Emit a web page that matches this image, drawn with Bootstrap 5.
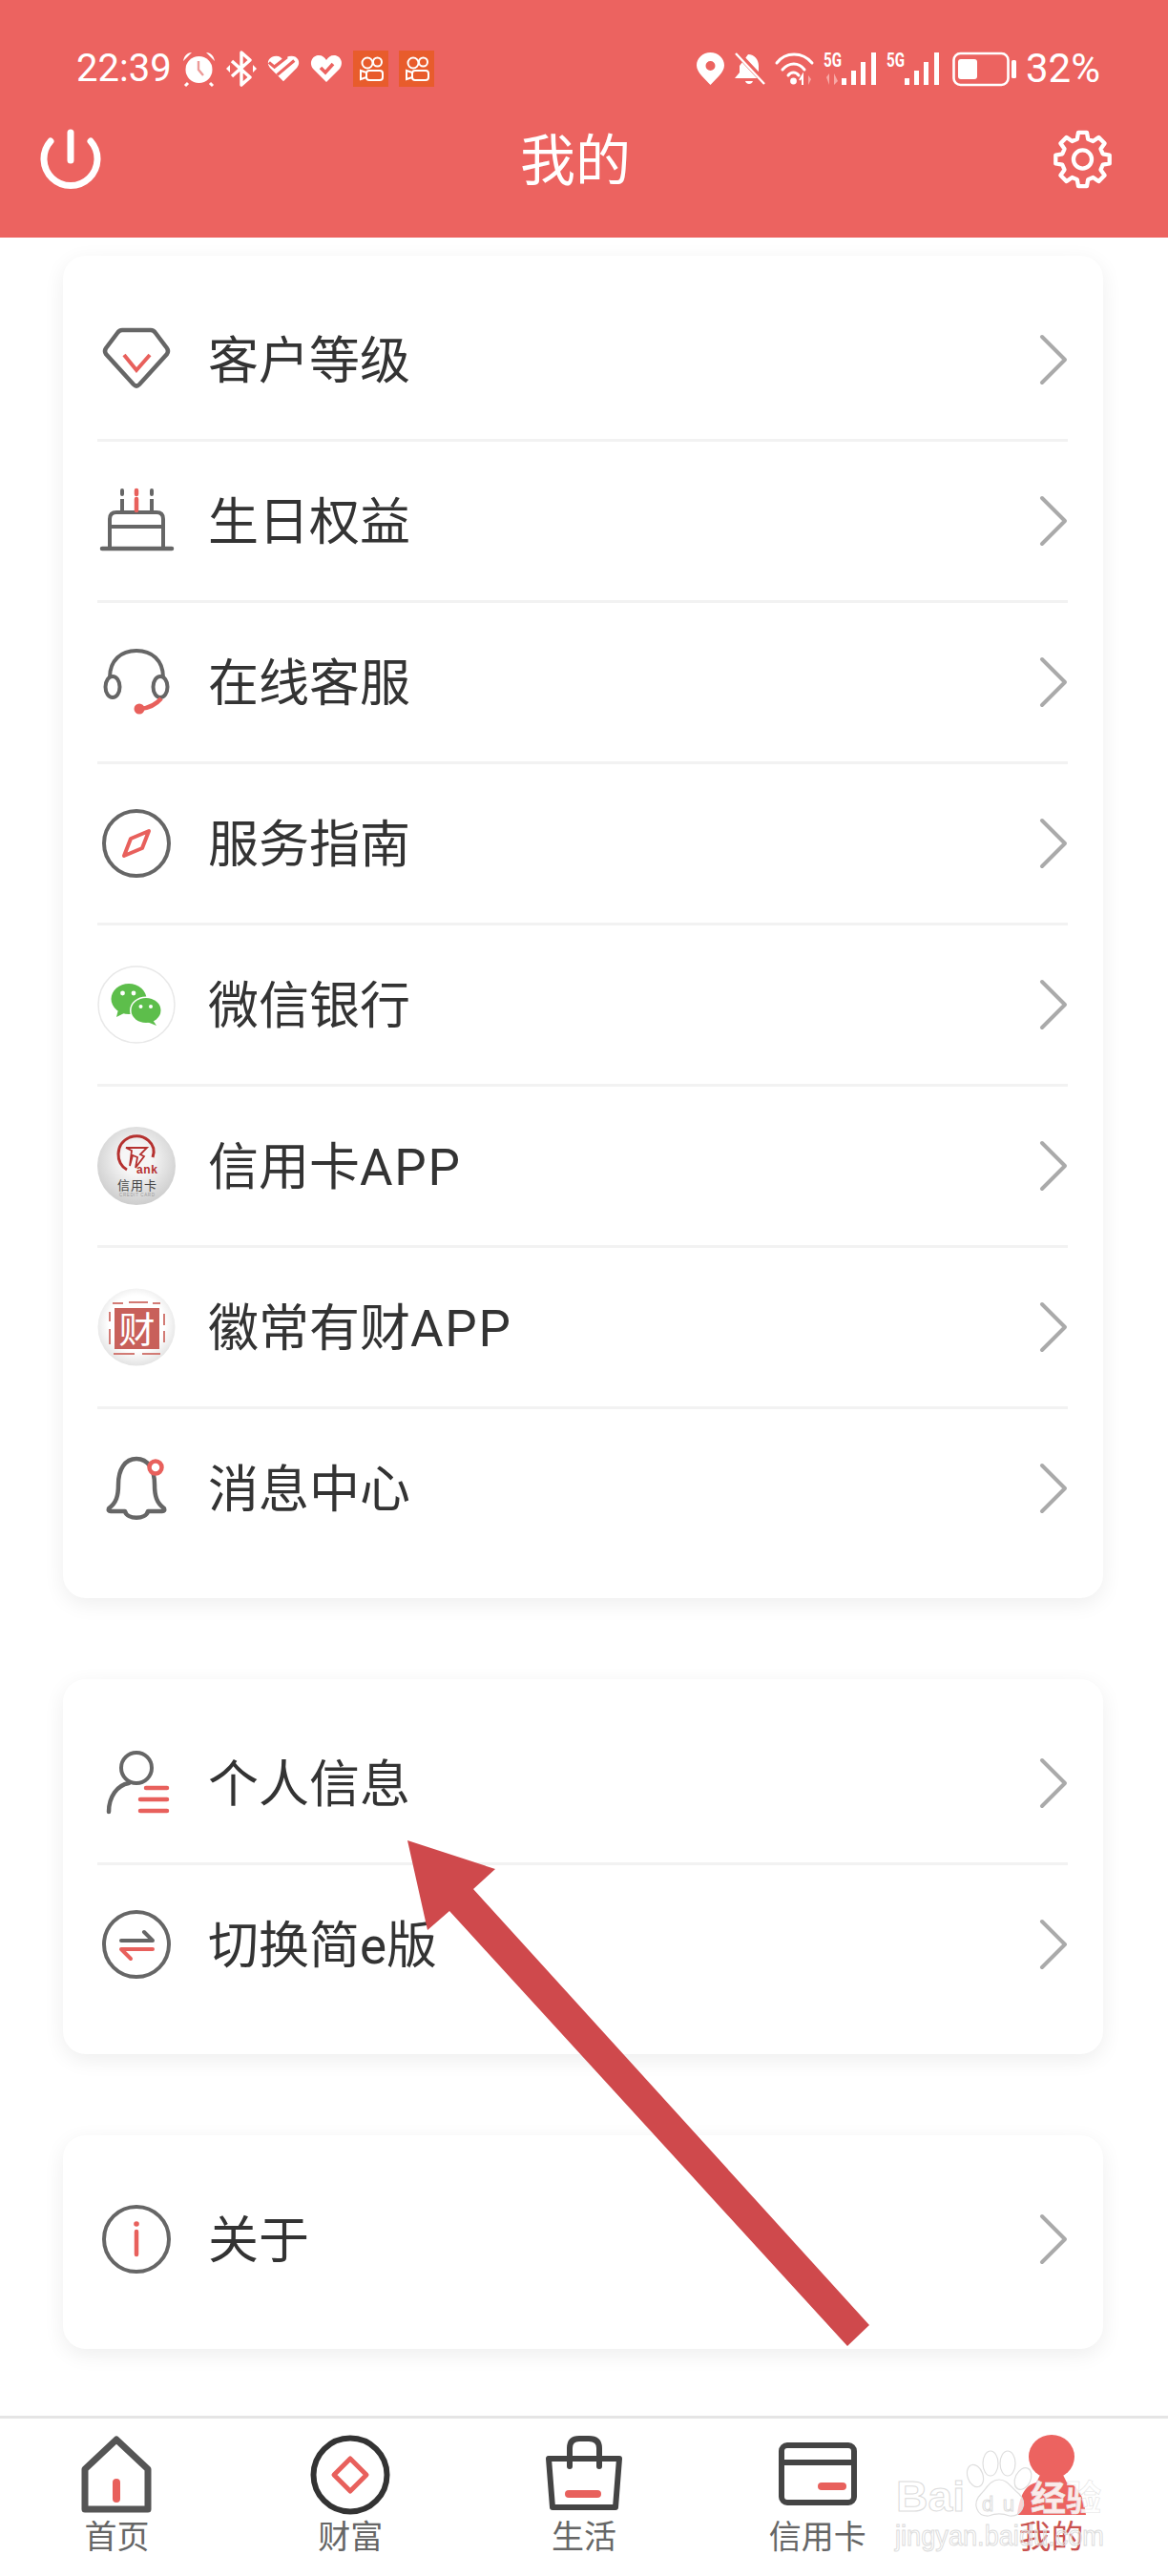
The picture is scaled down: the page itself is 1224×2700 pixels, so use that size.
<!DOCTYPE html>
<html lang="zh-CN">
<head>
<meta charset="utf-8">
<title>我的</title>
<link href="https://cdn.jsdelivr.net/npm/bootstrap@5.3.0/dist/css/bootstrap.min.css" rel="stylesheet">
<style>
body{font-family:Roboto,"Noto Sans CJK SC",sans-serif;background:#fff;color:#333}
.page-shell{width:1224px;height:2700px}
.top-head{background:#ec6360;height:249px;padding-top:53px;color:#fff}
.stat-row{height:38px;padding:0 71px 0 80px}
.stat-row svg{overflow:visible}
.stat-time{width:100px;font-size:40px;line-height:38px;white-space:nowrap}
.stat-pct{font-size:42px;line-height:38px;white-space:nowrap}
.stat-gap-l{gap:11px}
.stat-gap-r{gap:10px}
.title-row{margin-top:44px;height:64px;padding:0 59px 0 42px}
.title-text{font-size:58px;line-height:64px;margin:4px 4px 0 0}
.sheet-wrap{padding:19px 68px 0 66px}
.sheet{border:0;border-radius:24px;background:#fff;box-shadow:0 6px 22px rgba(0,0,0,.07);padding:26px 37px 32px 36px;margin-bottom:85px}
.sheet:last-child{margin-bottom:0}
.sheet .list-group-item{height:169px;padding:0;border:0;border-bottom:3px solid #f2f2f2;background:transparent;gap:34px;font-size:53px;color:#333}
.sheet .list-group-item:last-child{height:166px;border-bottom:0}
.row-label{flex:1;line-height:64px;padding-top:4px}
.latin-run{letter-spacing:1.700px}
.chev{margin-right:-1px}
.tab-bar{margin-top:auto;border-top:3px solid #e5e5e5;padding-top:17px;height:168px;background:#fff}
.tab-name{font-size:34px;line-height:40px;margin-top:3px;color:#666;white-space:nowrap}
.tab-name-on{color:#c9524f}
.over-arrow{left:420px;top:1920px}
.over-mark{left:930px;top:2550px}
</style>
</head>
<body>
<div class="page-shell position-relative d-flex flex-column">

<header class="top-head">
  <div class="stat-row d-flex justify-content-between align-items-center">
    <div class="d-flex align-items-center stat-gap-l">
      <span class="stat-time">22:39</span>
      <svg width="35" height="36" viewBox="0 0 35 36"><circle cx="17.500" cy="19" r="14" fill="#fff"/><path d="M1 10C2 4 6 1 10 1ZM34 10C33 4 29 1 25 1Z" fill="#fff"/><path d="M6 33 3 36M29 33 32 36" stroke="#fff" stroke-width="3"/><path d="M17 10V19L22 25" fill="none" stroke="#ec9a98" stroke-width="2.400"/></svg>
      <svg width="32" height="38" viewBox="0 0 32 38"><path d="M6 11 25 28 16 36V2L25 10 6 27" fill="none" stroke="#fff" stroke-width="3.400" stroke-linejoin="round"/><path d="M0 19 4 15V23ZM32 19 28 15V23Z" fill="#fff"/></svg>
      <svg width="34" height="30" viewBox="0 0 36 30"><path d="M18 29 3 14C-2 7 3 1 10 1 14 1 16 3 18 6 20 3 23 1 27 1 34 1 38 8 33 14Z" fill="#fff"/><path d="M2 8 8 13 22 2M11 22 30 6" fill="none" stroke="#ec6360" stroke-width="3.400"/></svg>
      <svg width="34" height="30" viewBox="0 0 34 30"><path d="M17 29 3 15C-2 8 3 1 9 1 13 1 15 3 17 6 19 3 21 1 25 1 31 1 36 8 31 15Z" fill="#fff"/><path d="M11 14 16 19 24 10" fill="none" stroke="#ec6360" stroke-width="3.600"/></svg>
      <svg width="37" height="38" viewBox="0 0 37 38"><rect width="37" height="38" fill="#e85c2c"/><g fill="none" stroke="#fff" stroke-width="2"><circle cx="15" cy="13" r="5.500"/><circle cx="25.500" cy="12" r="4.500"/><rect x="14" y="21" width="17" height="10" rx="3"/><path d="M14 23 8 21V30L14 28"/></g></svg>
      <svg width="37" height="38" viewBox="0 0 37 38"><rect width="37" height="38" fill="#e85c2c"/><g fill="none" stroke="#fff" stroke-width="2"><circle cx="15" cy="13" r="5.500"/><circle cx="25.500" cy="12" r="4.500"/><rect x="14" y="21" width="17" height="10" rx="3"/><path d="M14 23 8 21V30L14 28"/></g></svg>
    </div>
    <div class="d-flex align-items-center stat-gap-r">
      <svg width="29" height="34" viewBox="0 0 29 34"><path fill-rule="evenodd" d="M14.500 34C9 28 0 21 0 13.500 0 6 6.500 0 14.500 0S29 6 29 13.500C29 21 20 28 14.500 34ZM14.500 9A5 5 0 1 0 14.500 19 5 5 0 0 0 14.500 9Z" fill="#fff"/></svg>
      <svg width="33" height="36" viewBox="0 0 33 36"><path d="M15 3C22 3 26 9 26 15V23L30 28H1L6 22V15Z" fill="#fff"/><path d="M12 31H20C19 35 13 35 12 31Z" fill="#fff"/><path d="M3 1 33 33" stroke="#ec6360" stroke-width="6"/><path d="M2 2 32 34" stroke="#fff" stroke-width="2.400"/></svg>
      <svg width="41" height="34" viewBox="0 0 41 34"><g fill="none" stroke="#fff" stroke-width="3" stroke-linecap="round"><path d="M2 11C11 -1 29 -1 39 11"/><path d="M8 18C15 10 25 10 31 18"/><path d="M14 24C17 20 22 20 25 24"/></g><circle cx="19.500" cy="30" r="3.400" fill="#fff"/><path d="M29 34V24L26 29" fill="none" stroke="#fff" stroke-width="2"/><path d="M35 34V24L38 28Z" fill="#f7a9a6"/></svg>
      <svg width="56" height="34" viewBox="0 0 56 34"><text x="0" y="15" font-family="Roboto" font-weight="700" font-size="20" fill="#fff" textLength="19" lengthAdjust="spacingAndGlyphs">5G</text><path d="M6 34V22L3 26ZM11 22V34L15 30Z" fill="#f7a9a6"/><g fill="#fff"><rect x="19" y="27" width="5" height="7"/><rect x="29" y="19" width="5" height="15"/><rect x="39" y="10" width="5" height="24"/><rect x="50" y="0" width="5" height="34"/></g></svg>
      <svg width="55" height="34" viewBox="0 0 55 34"><text x="0" y="15" font-family="Roboto" font-weight="700" font-size="20" fill="#fff" textLength="19" lengthAdjust="spacingAndGlyphs">5G</text><g fill="#fff"><rect x="19" y="27" width="5" height="7"/><rect x="29" y="19" width="5" height="15"/><rect x="39" y="10" width="5" height="24"/><rect x="50" y="0" width="5" height="34"/></g></svg>
      <svg width="71" height="36" viewBox="0 0 71 36"><rect x="5.500" y="2" width="57" height="33" rx="7" fill="none" stroke="#fff" stroke-width="2.600"/><rect x="10" y="8" width="20" height="21" rx="3" fill="#fff"/><rect x="66" y="9" width="5" height="19" rx="1.500" fill="#fff"/></svg>
      <span class="stat-pct">32%</span>
    </div>
  </div>
  <div class="title-row d-flex justify-content-between align-items-center">
    <svg width="64" height="64" viewBox="0 0 64 64"><g fill="none" stroke="#fff" stroke-linecap="round" stroke-width="7"><path d="M11 13A28 28 0 1 0 53 13"/><path d="M32 4V33"/></g></svg>
    <span class="title-text">我的</span>
    <svg width="61" height="64" viewBox="-32 -32 64 64"><polygon fill="none" stroke="#fff" stroke-width="4.500" stroke-linejoin="round" points="-6,-22.200 -4.700,-29.600 4.700,-29.600 6,-22.200 11.450,-19.940 17.600,-24.250 24.250,-17.600 19.940,-11.450 22.200,-6 29.600,-4.700 29.600,4.700 22.200,6 19.940,11.450 24.250,17.600 17.600,24.250 11.450,19.940 6,22.200 4.700,29.600 -4.700,29.600 -6,22.200 -11.450,19.940 -17.600,24.250 -24.250,17.600 -19.940,11.450 -22.200,6 -29.600,4.700 -29.600,-4.700 -22.200,-6 -19.940,-11.450 -24.250,-17.600 -17.600,-24.250 -11.450,-19.940"/><circle r="10" fill="none" stroke="#fff" stroke-width="4.500"/></svg>
  </div>
</header>

<main class="sheet-wrap">
  <section class="card sheet">
    <div class="list-group list-group-flush">
      <div class="list-group-item d-flex align-items-center">
        <svg width="82" height="84" viewBox="1 0 82 84"><path d="M27 11H57Q60 11 62 14L74 30Q76 33 74 36L45 68Q42 71 39 68L10 36Q8 33 10 30L22 14Q24 11 27 11Z" fill="none" stroke="#666" stroke-width="4.500"/><path d="M29 37 42 53 56 37" fill="none" stroke="#e8605c" stroke-width="4"/></svg>
        <span class="row-label">客户等级</span>
        <svg class="chev" width="32" height="54" viewBox="0 0 32 54"><path d="M4 3 28 27 4 51" fill="none" stroke="#aaa" stroke-width="4" stroke-linecap="round" stroke-linejoin="round"/></svg>
      </div>
      <div class="list-group-item d-flex align-items-center">
        <svg width="82" height="84" viewBox="1 0 82 84"><g fill="none" stroke="#666" stroke-width="4"><path d="M14 71V40Q14 33 21 33H63Q70 33 70 40V71"/><path d="M14 48H70"/><path d="M6 71H79" stroke-linecap="round" stroke-width="4.500"/><path d="M27 19V31M58 19V31"/><path d="M27 10V14M58 10V14" stroke-linecap="round"/></g><path d="M42 19V31M42 10V14" fill="none" stroke="#e8605c" stroke-width="4.500" stroke-linecap="round"/></svg>
        <span class="row-label">生日权益</span>
        <svg class="chev" width="32" height="54" viewBox="0 0 32 54"><path d="M4 3 28 27 4 51" fill="none" stroke="#aaa" stroke-width="4" stroke-linecap="round" stroke-linejoin="round"/></svg>
      </div>
      <div class="list-group-item d-flex align-items-center">
        <svg width="82" height="84" viewBox="1 0 82 84"><g fill="none" stroke="#666" stroke-width="4"><path d="M14 37C14 19 26 9 42 9S70 19 70 37"/><ellipse cx="17" cy="47" rx="7.500" ry="11"/><ellipse cx="67" cy="47" rx="7.500" ry="11"/></g><path d="M68 59C63 65 56 69 46 70" fill="none" stroke="#e8605c" stroke-width="4.500"/><circle cx="45" cy="70" r="5.500" fill="#e8605c"/></svg>
        <span class="row-label">在线客服</span>
        <svg class="chev" width="32" height="54" viewBox="0 0 32 54"><path d="M4 3 28 27 4 51" fill="none" stroke="#aaa" stroke-width="4" stroke-linecap="round" stroke-linejoin="round"/></svg>
      </div>
      <div class="list-group-item d-flex align-items-center">
        <svg width="82" height="84" viewBox="1 0 82 84"><circle cx="42" cy="42" r="34" fill="none" stroke="#666" stroke-width="4"/><path d="M55 29 48 47 29 55 36 37Z" fill="none" stroke="#e8605c" stroke-width="4" stroke-linejoin="round"/></svg>
        <span class="row-label">服务指南</span>
        <svg class="chev" width="32" height="54" viewBox="0 0 32 54"><path d="M4 3 28 27 4 51" fill="none" stroke="#aaa" stroke-width="4" stroke-linecap="round" stroke-linejoin="round"/></svg>
      </div>
      <div class="list-group-item d-flex align-items-center">
        <svg width="82" height="84" viewBox="1 0 82 84"><circle cx="42" cy="42" r="40" fill="#fff" stroke="#e8e8e8" stroke-width="1.500"/><ellipse cx="34" cy="36" rx="18.500" ry="16" fill="#5dbe4b"/><path d="M23 47 21 55 31 50Z" fill="#5dbe4b"/><ellipse cx="52" cy="48" rx="17" ry="14.500" fill="#fff"/><ellipse cx="52" cy="48" rx="15.500" ry="13" fill="#5dbe4b"/><path d="M59 58 63 64 53 60Z" fill="#5dbe4b"/><circle cx="27.500" cy="30" r="2.400" fill="#fff"/><circle cx="39" cy="30" r="2.400" fill="#fff"/><circle cx="46.500" cy="44" r="2" fill="#fff"/><circle cx="57" cy="44" r="2" fill="#fff"/></svg>
        <span class="row-label">微信银行</span>
        <svg class="chev" width="32" height="54" viewBox="0 0 32 54"><path d="M4 3 28 27 4 51" fill="none" stroke="#aaa" stroke-width="4" stroke-linecap="round" stroke-linejoin="round"/></svg>
      </div>
      <div class="list-group-item d-flex align-items-center">
        <svg width="82" height="84" viewBox="1 0 82 84"><defs><radialGradient id="bankglow" cx=".5" cy=".42" r=".62"><stop offset=".3" stop-color="#f6f6f6"/><stop offset="1" stop-color="#c9c9c9"/></radialGradient></defs><circle cx="42" cy="42" r="41" fill="url(#bankglow)"/><path d="M32 46C20 40 19 19 35 12 50 7 64 19 59 33" fill="none" stroke="#b5312f" stroke-width="3"/><path d="M31 23H53L46 30 50 32 41 44 43 33 38 31 35 42 37 26Z" fill="none" stroke="#b5312f" stroke-width="1.800"/><text x="42" y="50" font-family="Liberation Sans" font-weight="700" font-size="12" fill="#b5312f" textLength="22">ank</text><text x="22" y="67" font-family="Noto Sans CJK SC" font-size="13" fill="#444" textLength="41">信用卡</text><text x="24" y="74" font-family="Liberation Sans" font-size="4.500" fill="#999" textLength="37">CREDIT CARD</text></svg>
        <span class="row-label">信用卡<span class="latin-run">APP</span></span>
        <svg class="chev" width="32" height="54" viewBox="0 0 32 54"><path d="M4 3 28 27 4 51" fill="none" stroke="#aaa" stroke-width="4" stroke-linecap="round" stroke-linejoin="round"/></svg>
      </div>
      <div class="list-group-item d-flex align-items-center">
        <svg width="82" height="84" viewBox="1 0 82 84"><defs><radialGradient id="caiglow" cx=".5" cy=".45" r=".6"><stop offset=".6" stop-color="#fff"/><stop offset="1" stop-color="#dcdcdc"/></radialGradient></defs><circle cx="42" cy="42" r="40.500" fill="url(#caiglow)"/><rect x="19" y="22" width="47" height="43" fill="#c8605a"/><path d="M17 17H28M34 16H54M59 17H67M14 26V36M14 44V60M71 28V40M71 46V58M18 70H40M48 70H67" stroke="#d27b75" stroke-width="2" fill="none"/><text x="42.500" y="58" text-anchor="middle" font-family="Noto Sans CJK SC" font-size="38" fill="#fff">财</text></svg>
        <span class="row-label">徽常有财<span class="latin-run">APP</span></span>
        <svg class="chev" width="32" height="54" viewBox="0 0 32 54"><path d="M4 3 28 27 4 51" fill="none" stroke="#aaa" stroke-width="4" stroke-linecap="round" stroke-linejoin="round"/></svg>
      </div>
      <div class="list-group-item d-flex align-items-center">
        <svg width="82" height="84" viewBox="1 0 82 84"><path d="M42 11C54 11 61 22 61 38 61 50 63 57 71 63Q72 66 69 66H54C52 75 32 75 30 66H15Q12 66 13 63C21 57 23 50 23 38 23 22 30 11 42 11Z" fill="none" stroke="#666" stroke-width="4.500" stroke-linejoin="round"/><circle cx="62" cy="20" r="6.500" fill="#fff" stroke="#e8605c" stroke-width="4.500"/></svg>
        <span class="row-label">消息中心</span>
        <svg class="chev" width="32" height="54" viewBox="0 0 32 54"><path d="M4 3 28 27 4 51" fill="none" stroke="#aaa" stroke-width="4" stroke-linecap="round" stroke-linejoin="round"/></svg>
      </div>
    </div>
  </section>

  <section class="card sheet">
    <div class="list-group list-group-flush">
      <div class="list-group-item d-flex align-items-center">
        <svg width="82" height="84" viewBox="1 0 82 84"><circle cx="42" cy="26" r="16" fill="none" stroke="#666" stroke-width="4"/><path d="M13 72C13 56 22 44 34 42" fill="none" stroke="#666" stroke-width="4.500" stroke-linecap="round"/><path d="M52 47H74M46 59H74M46 71H74" fill="none" stroke="#e8605c" stroke-width="4.500" stroke-linecap="round"/></svg>
        <span class="row-label">个人信息</span>
        <svg class="chev" width="32" height="54" viewBox="0 0 32 54"><path d="M4 3 28 27 4 51" fill="none" stroke="#aaa" stroke-width="4" stroke-linecap="round" stroke-linejoin="round"/></svg>
      </div>
      <div class="list-group-item d-flex align-items-center">
        <svg width="82" height="84" viewBox="1 0 82 84"><circle cx="42" cy="42" r="34" fill="none" stroke="#666" stroke-width="4"/><path d="M26 38H59L50 29" fill="none" stroke="#666" stroke-width="4" stroke-linecap="round" stroke-linejoin="round"/><path d="M59 47H26L36 57" fill="none" stroke="#e8605c" stroke-width="4" stroke-linecap="round" stroke-linejoin="round"/></svg>
        <span class="row-label">切换简e版</span>
        <svg class="chev" width="32" height="54" viewBox="0 0 32 54"><path d="M4 3 28 27 4 51" fill="none" stroke="#aaa" stroke-width="4" stroke-linecap="round" stroke-linejoin="round"/></svg>
      </div>
    </div>
  </section>

  <section class="card sheet">
    <div class="list-group list-group-flush">
      <div class="list-group-item d-flex align-items-center">
        <svg width="82" height="84" viewBox="1 0 82 84"><circle cx="42" cy="42" r="34" fill="none" stroke="#666" stroke-width="4"/><path d="M42 34V58" stroke="#e8605c" stroke-width="4.500" stroke-linecap="round"/><circle cx="42" cy="26" r="2.800" fill="#e8605c"/></svg>
        <span class="row-label">关于</span>
        <svg class="chev" width="32" height="54" viewBox="0 0 32 54"><path d="M4 3 28 27 4 51" fill="none" stroke="#aaa" stroke-width="4" stroke-linecap="round" stroke-linejoin="round"/></svg>
      </div>
    </div>
  </section>
</main>

<nav class="tab-bar row row-cols-5 g-0">
  <div class="col d-flex flex-column align-items-center">
    <svg width="84" height="84" viewBox="0 0 84 84"><path d="M42 5 75 36V78H9V36Z" fill="none" stroke="#555" stroke-width="7" stroke-linejoin="round"/><path d="M42 50V67" stroke="#e8605c" stroke-width="8" stroke-linecap="round"/></svg>
    <span class="tab-name">首页</span>
  </div>
  <div class="col d-flex flex-column align-items-center">
    <svg width="84" height="84" viewBox="0 0 84 84"><circle cx="42" cy="42" r="38.500" fill="none" stroke="#333" stroke-width="6"/><path d="M42 25 59 42 42 59 25 42Z" fill="none" stroke="#e8605c" stroke-width="5" stroke-linejoin="round"/></svg>
    <span class="tab-name">财富</span>
  </div>
  <div class="col d-flex flex-column align-items-center">
    <svg width="84" height="84" viewBox="0 0 84 84"><path d="M5 25H79L75 76H9Z" fill="none" stroke="#444" stroke-width="6" stroke-linejoin="round"/><path d="M27 33V14Q27 4 37 4H47Q58 4 58 14V33" fill="none" stroke="#444" stroke-width="6" stroke-linecap="round"/><path d="M26 62H56" stroke="#e8605c" stroke-width="8" stroke-linecap="round"/></svg>
    <span class="tab-name">生活</span>
  </div>
  <div class="col d-flex flex-column align-items-center">
    <svg width="84" height="84" viewBox="0 0 84 84"><rect x="4" y="11" width="76" height="60" rx="6" fill="none" stroke="#444" stroke-width="6"/><path d="M4 29H80" stroke="#444" stroke-width="6"/><path d="M46 54H68" stroke="#e8605c" stroke-width="8" stroke-linecap="round"/></svg>
    <span class="tab-name">信用卡</span>
  </div>
  <div class="col d-flex flex-column align-items-center">
    <svg width="84" height="84" viewBox="0 0 84 84"><ellipse cx="42" cy="23" rx="24" ry="23" fill="#ec6360"/><path d="M31 40H53L58 50C66 52 75 58 78 84H6C9 58 18 52 26 50Z" fill="#ec6360"/></svg>
    <span class="tab-name tab-name-on">我的</span>
  </div>
</nav>

<svg class="over-arrow position-absolute" width="500" height="545" viewBox="420 1920 500 545"><polygon fill="#cf494c" points="427,1929 519,1959 496,1980 911,2437 888,2459 471,2003 448,2023"/></svg>

<svg class="over-mark position-absolute" width="240" height="130" viewBox="930 2550 240 130"><g stroke="#dedede" stroke-width="1.200" fill="#fff" fill-opacity=".72"><ellipse cx="1022" cy="2595" rx="8" ry="12" transform="rotate(-20 1022 2595)"/><ellipse cx="1038" cy="2582" rx="8" ry="13"/><ellipse cx="1056" cy="2582" rx="8" ry="13"/><ellipse cx="1072" cy="2598" rx="8" ry="12" transform="rotate(25 1072 2598)"/><path d="M1047 2599C1056 2599 1060 2608 1068 2614 1078 2624 1070 2638 1058 2637 1050 2634 1044 2634 1036 2637 1024 2638 1018 2624 1028 2614 1034 2608 1038 2599 1047 2599Z"/></g><g font-family="Liberation Sans" stroke="#dcdcdc" stroke-width="1"><text x="939" y="2632" font-size="44" font-weight="700" fill="#fff" fill-opacity=".7" textLength="72" lengthAdjust="spacingAndGlyphs">Bai</text><text x="1029" y="2632" font-size="22" fill="#fff" fill-opacity=".7" textLength="34">du</text><text x="938" y="2668" font-size="29" fill="#fff" fill-opacity=".35" textLength="219" lengthAdjust="spacingAndGlyphs">jingyan.baidu.com</text></g><text x="1080" y="2632" font-family="Noto Sans CJK SC" font-weight="700" font-size="37" fill="#fff" fill-opacity=".9" stroke="#e3e3e3" stroke-width=".6" textLength="74">经验</text></svg>

</div>
<script src="https://cdn.jsdelivr.net/npm/bootstrap@5.3.0/dist/js/bootstrap.bundle.min.js"></script>
</body>
</html>
